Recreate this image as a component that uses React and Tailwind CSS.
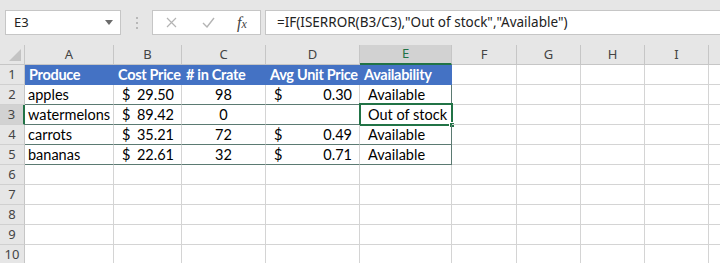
import React from 'react'

const cols = [
    { l: 'A', w: 'w-[89px]' },
    { l: 'B', w: 'w-[68px]' },
    { l: 'C', w: 'w-[84px]' },
    { l: 'D', w: 'w-[94px]' },
    { l: 'E', w: 'w-[92px]' },
    { l: 'F', w: 'w-[65px]' },
    { l: 'G', w: 'w-[64px]' },
    { l: 'H', w: 'w-[64px]' },
    { l: 'I', w: 'w-[64px]' },
    { l: '', w: 'w-[64px]' },
]

const header = ['Produce', 'Cost Price', '# in Crate', 'Avg Unit Price', 'Availability']

const rows = [
    ['apples', '29.50', '98', '0.30', 'Available'],
    ['watermelons', '89.42', '0', '', 'Out of stock'],
    ['carrots', '35.21', '72', '0.49', 'Available'],
    ['bananas', '22.61', '32', '0.71', 'Available'],
]

const Money = ({ v }) => (
    <div className="flex justify-between w-full pl-[8px] pr-[7px]">
        <span>{v ? '$' : ''}</span>
        <span>{v}</span>
    </div>
)

const RowHead = ({ n, sel }) => (
    <div className={`w-[25px] h-[20px] shrink-0 flex items-center justify-center text-[13px] font-['Noto_Sans',sans-serif] border-b border-[#d0d0d0] ${sel ? 'bg-[#d2d2d2] text-[#444] border-r-2 border-r-[#217346]' : 'bg-[#e6e6e6] text-[#444] border-r border-r-[#c6c6c6]'}`}>
        {n}
    </div>
)

export default function App() {
    return (
        <div className="w-[720px] h-[263px] overflow-hidden bg-[#e6e6e6] font-['Lato',sans-serif]">
            {/* formula bar */}
            <div className="h-[45px] flex items-start pt-[10px] pl-[5px]">
                <div className="w-[116px] h-[25px] bg-white border border-[#c6c6c6] flex items-center justify-between pl-[8px] pr-[7px] text-[13px] text-[#222] font-['Noto_Sans',sans-serif]">
                    <span>E3</span>
                    <svg width="8" height="5" viewBox="0 0 8 5"><path d="M0 0h8L4 5z" fill="#6b6b6b" /></svg>
                </div>
                <div className="w-[31px] h-[25px] flex flex-col items-center justify-center gap-[3px]">
                    <span className="w-[2px] h-[2px] bg-[#b8b8b8]"></span>
                    <span className="w-[2px] h-[2px] bg-[#b8b8b8]"></span>
                    <span className="w-[2px] h-[2px] bg-[#b8b8b8]"></span>
                </div>
                <div className="w-[109px] h-[25px] bg-white border border-[#c6c6c6] flex items-center">
                    <svg className="ml-[13px]" width="11" height="11" viewBox="0 0 11 11">
                        <path d="M1 1l9 9M10 1l-9 9" stroke="#b4b4b4" strokeWidth="1.2" fill="none" />
                    </svg>
                    <svg className="ml-[25px]" width="13" height="11" viewBox="0 0 13 11">
                        <path d="M1 6l4 4L12 1" stroke="#b4b4b4" strokeWidth="1.4" fill="none" />
                    </svg>
                    <span className="ml-[22px] font-['Liberation_Serif',serif] italic text-[16px] text-[#444] leading-none">
                        f<span className="text-[12px]">x</span>
                    </span>
                </div>
                <div className="ml-[4px] flex-1 h-[25px] bg-white border border-r-0 border-[#c6c6c6] flex items-center pl-[11px] text-[13.5px] text-[#222] font-['Noto_Sans',sans-serif] whitespace-nowrap">
                    =IF(ISERROR(B3/C3),"Out of stock","Available")
                </div>
            </div>

            {/* column headers */}
            <div className="flex h-[20px]">
                <div className="w-[25px] h-[20px] shrink-0 border-r border-b border-[#c6c6c6] flex items-end justify-end p-[3px]">
                    <svg width="12" height="12" viewBox="0 0 12 12"><path d="M12 0v12H0z" fill="#c3c3c3" /></svg>
                </div>
                {cols.map((c, i) => (
                    <div
                        key={i}
                        className={`${c.w} shrink-0 h-[20px] flex items-center justify-center text-[13px] font-['Noto_Sans',sans-serif] border-r border-r-[#c6c6c6] ${c.l === 'E' ? 'bg-[#d2d2d2] text-[#217346] border-b-2 border-b-[#217346]' : 'text-[#444] border-b border-b-[#c6c6c6]'}`}
                    >
                        {c.l}
                    </div>
                ))}
            </div>

            {/* row 1: table header */}
            <div className="flex h-[20px] bg-white">
                <RowHead n={1} />
                {cols.map((c, i) => (
                    <div
                        key={i}
                        className={`${c.w} shrink-0 h-[20px] flex items-center pl-[4px] text-[14.5px] tracking-[-0.3px] whitespace-nowrap border-r border-b ${i < 5 ? 'bg-[#4472c4] text-white font-bold border-[#4472c4]' : 'border-[#d4d4d4]'}`}
                    >
                        {header[i] || ''}
                    </div>
                ))}
            </div>

            {/* data rows */}
            {rows.map((r, ri) => (
                <div key={ri} className="flex h-[20px] bg-white">
                    <RowHead n={ri + 2} sel={ri === 1} />
                    {cols.map((c, i) => {
                        const inTable = i < 5
                        const isSel = ri === 1 && i === 4
                        let content = null
                        let align = 'pl-[3px]'
                        if (i === 0) content = r[0]
                        if (i === 1 || i === 3) { content = <Money v={r[i]} />; align = '' }
                        if (i === 2) { content = r[2]; align = 'justify-center' }
                        if (i === 4) { content = r[4]; align = 'pl-[8px]' }
                        return (
                            <div
                                key={i}
                                className={`${c.w} shrink-0 h-[20px] relative flex items-center text-[14.5px] text-black whitespace-nowrap border-r border-b ${align} ${inTable ? 'border-b-[#5b7a72]' : 'border-b-[#d4d4d4]'} ${i === 4 ? 'border-r-[#5b7a72]' : 'border-r-[#d4d4d4]'}`}
                            >
                                {content}
                                {isSel && (
                                    <>
                                        <div className="absolute left-[-1px] top-[-2px] right-[-2px] bottom-[-2px] border-2 border-[#217346]"></div>
                                        <div className="absolute right-[-4px] bottom-[-4px] w-[6px] h-[6px] bg-[#217346] border border-white"></div>
                                    </>
                                )}
                            </div>
                        )
                    })}
                </div>
            ))}

            {/* empty rows */}
            {[6, 7, 8, 9, 10].map(n => (
                <div key={n} className="flex h-[20px] bg-white">
                    <RowHead n={n} />
                    {cols.map((c, i) => (
                        <div key={i} className={`${c.w} shrink-0 h-[20px] border-r border-b border-[#d4d4d4]`}></div>
                    ))}
                </div>
            ))}
        </div>
    )
}
